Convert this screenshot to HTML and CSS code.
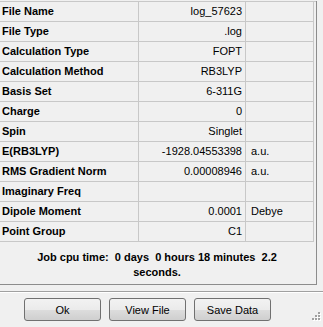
FILE: index.html
```html
<!DOCTYPE html>
<html lang="en">
<head>
  <meta charset="UTF-8" />
  <title>Summary</title>
  <link rel="stylesheet" href="styles.css">
</head>
<body>
  <div class="panel">
    <div class="grid">
      <div class="label">File Name</div><div class="value">log_57623</div><div class="unit"></div>
      <div class="label">File Type</div><div class="value">.log</div><div class="unit"></div>
      <div class="label">Calculation Type</div><div class="value">FOPT</div><div class="unit"></div>
      <div class="label">Calculation Method</div><div class="value">RB3LYP</div><div class="unit"></div>
      <div class="label">Basis Set</div><div class="value">6-311G</div><div class="unit"></div>
      <div class="label">Charge</div><div class="value">0</div><div class="unit"></div>
      <div class="label">Spin</div><div class="value">Singlet</div><div class="unit"></div>
      <div class="label">E(RB3LYP)</div><div class="value">-1928.04553398</div><div class="unit">a.u.</div>
      <div class="label">RMS Gradient Norm</div><div class="value">0.00008946</div><div class="unit">a.u.</div>
      <div class="label">Imaginary Freq</div><div class="value"></div><div class="unit"></div>
      <div class="label">Dipole Moment</div><div class="value">0.0001</div><div class="unit">Debye</div>
      <div class="label">Point Group</div><div class="value">C1</div><div class="unit"></div>
    </div>
    <div class="cpu">Job cpu time:  0 days  0 hours 18 minutes  2.2<br>seconds.</div>
  </div>
  <div class="separator"></div>
  <div class="buttons">
    <button class="btn">Ok</button>
    <button class="btn">View File</button>
    <button class="btn">Save Data</button>
  </div>
  <svg class="grip" width="12" height="12" viewBox="0 0 12 12">
    <g fill="#fff">
      <rect x="10" y="2" width="2" height="2"/>
      <rect x="7" y="5" width="2" height="2"/><rect x="10" y="5" width="2" height="2"/>
      <rect x="4" y="8" width="2" height="2"/><rect x="7" y="8" width="2" height="2"/><rect x="10" y="8" width="2" height="2"/>
    </g>
    <g fill="#a0a0a0">
      <rect x="9" y="1" width="2" height="2"/>
      <rect x="6" y="4" width="2" height="2"/><rect x="9" y="4" width="2" height="2"/>
      <rect x="3" y="7" width="2" height="2"/><rect x="6" y="7" width="2" height="2"/><rect x="9" y="7" width="2" height="2"/>
    </g>
  </svg>
</body>
</html>
```

FILE: styles.css
```css
body {
  background-color: #f0f0f0;
  color: #000;
  font-family: "Liberation Sans", Arial, sans-serif;
  font-size: 11px;
  margin: 0;
  width: 323px;
  height: 327px;
  position: relative;
  overflow: hidden;
}

.panel {
  width: 316px;
  height: 283px;
  border-right: 1px solid #8c8c8c;
  border-bottom: 1px solid #8c8c8c;
}

.grid {
  display: grid;
  grid-template-columns: 139px 107px 68px;
  margin-top: 1px;
  border-top: 1px solid #c8c8c8;
}

.grid div {
  height: 20px;
  line-height: 19px;
  box-sizing: border-box;
  border-right: 1px solid #c8c8c8;
  border-bottom: 1px solid #c8c8c8;
  white-space: nowrap;
  overflow: hidden;
}

.label {
  font-weight: bold;
  padding-left: 2px;
}

.value {
  text-align: right;
  padding-right: 3px;
}

.unit {
  padding-left: 5px;
}

.cpu {
  font-weight: bold;
  text-align: center;
  white-space: pre;
  line-height: 15px;
  padding-top: 8px;
  width: 314px;
}

.separator {
  margin-top: 6px;
  border-top: 1px solid #a0a0a0;
  border-bottom: 1px solid #fff;
}

.buttons {
  display: flex;
  gap: 8px;
  padding-left: 24px;
  margin-top: 5px;
}

.btn {
  width: 77px;
  height: 23px;
  font-family: "Liberation Sans", Arial, sans-serif;
  font-size: 11px;
  color: #000;
  border: 1px solid #707070;
  border-radius: 3px;
  background: linear-gradient(#f2f2f2 0%, #ebebeb 50%, #dddddd 51%, #cfcfcf 100%);
  padding: 0;
}

.grip {
  position: absolute;
  right: 2px;
  bottom: 4px;
}
```
